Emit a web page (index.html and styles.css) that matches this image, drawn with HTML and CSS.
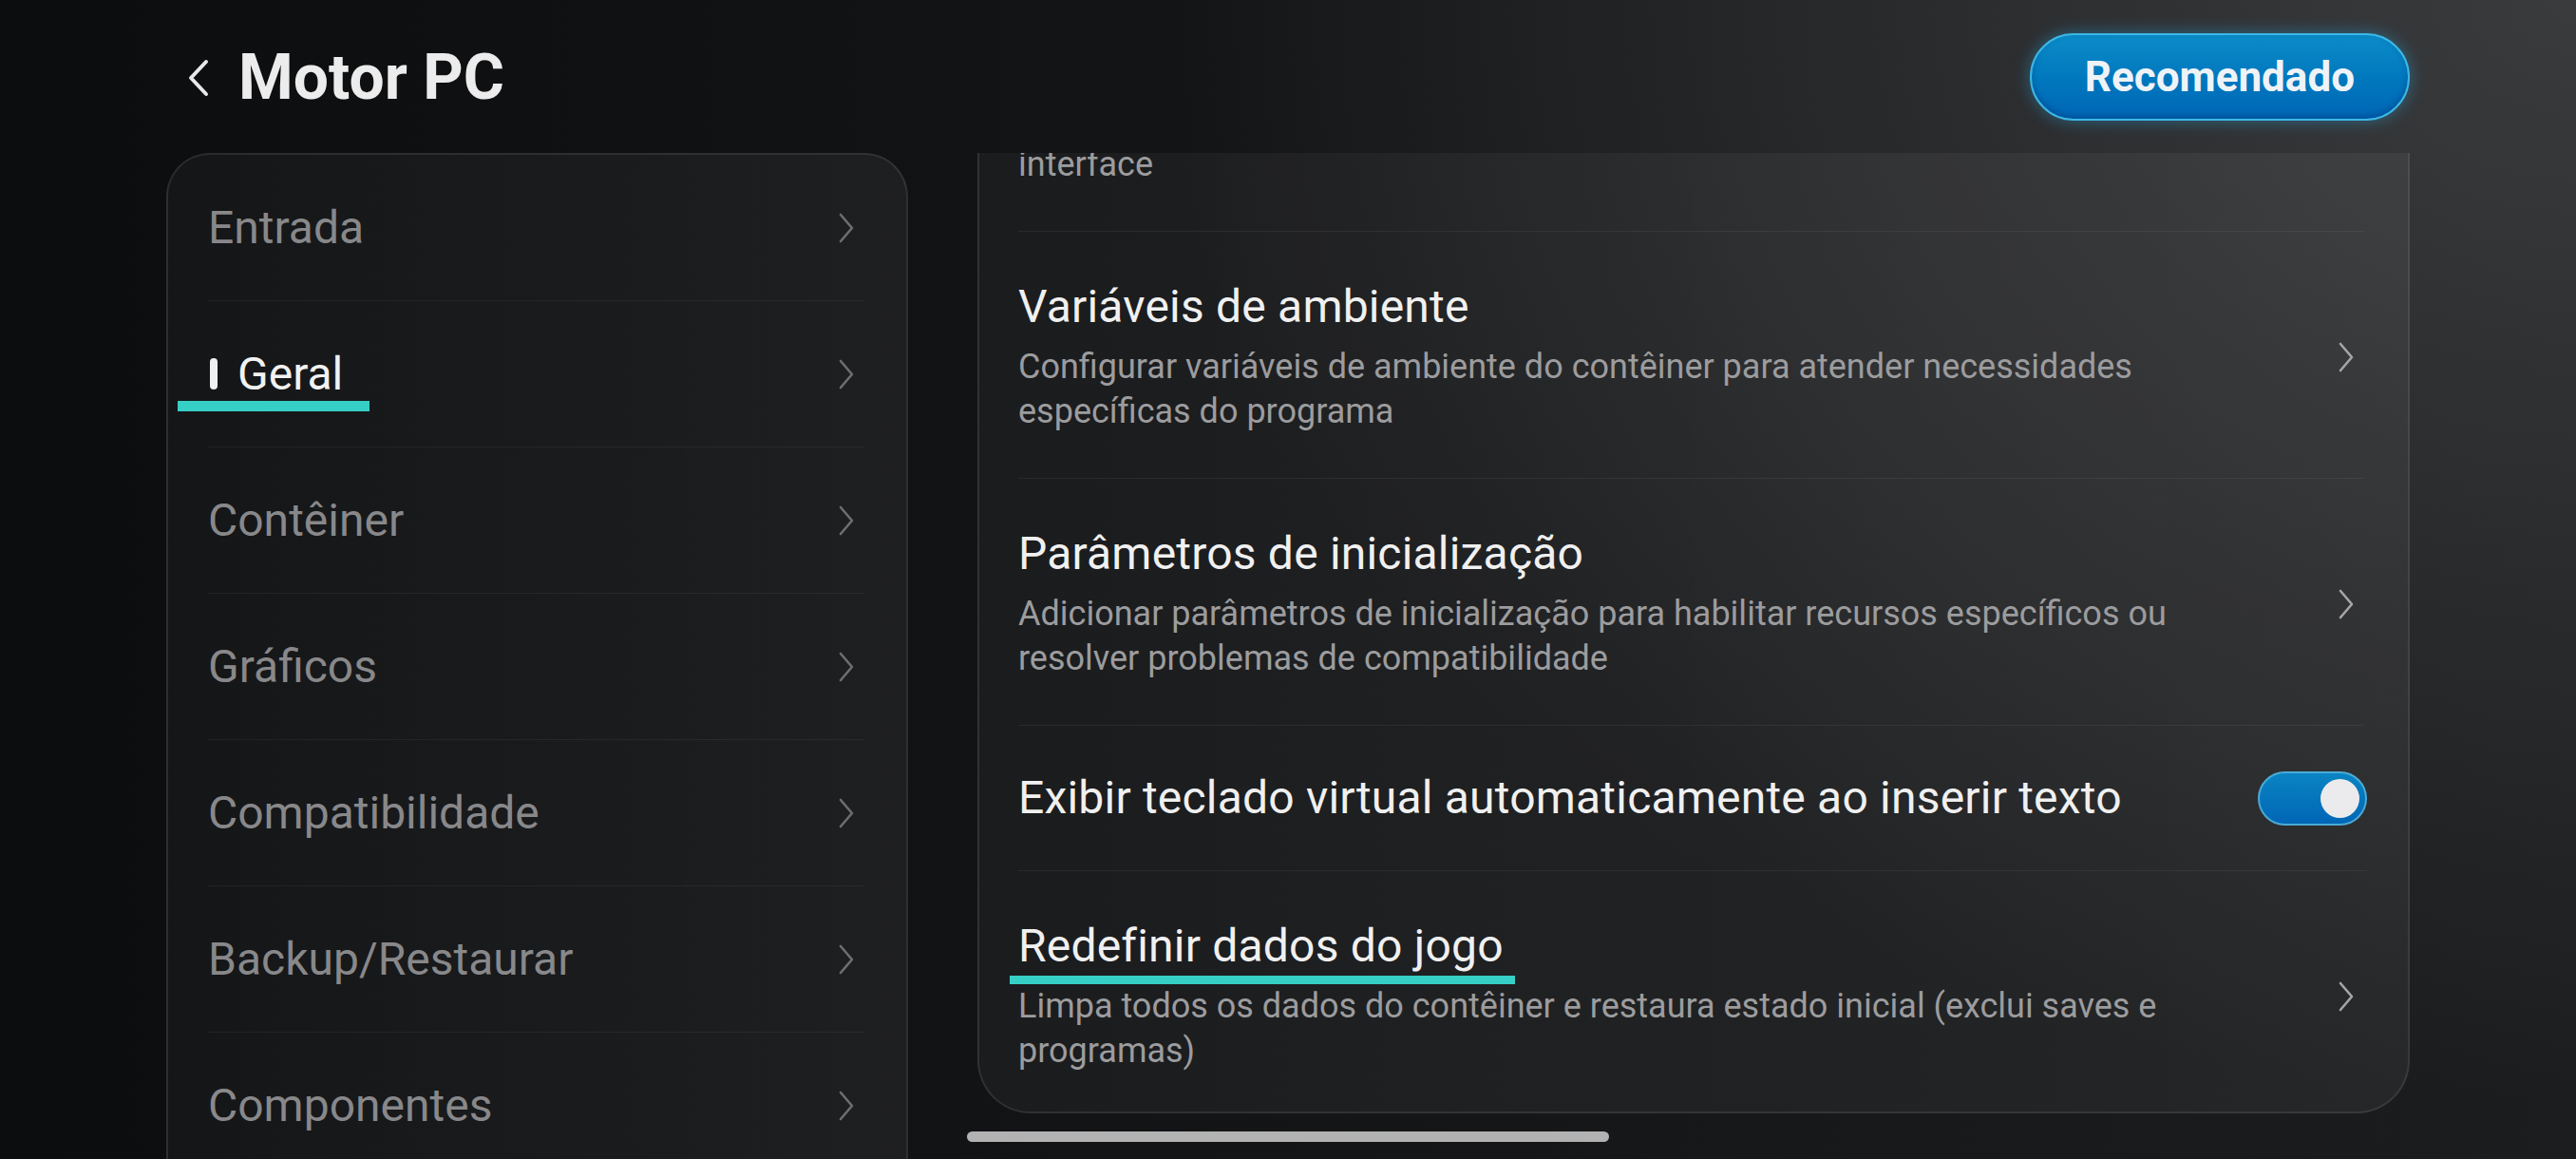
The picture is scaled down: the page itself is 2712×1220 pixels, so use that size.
FILE: index.html
```html
<!DOCTYPE html>
<html lang="pt">
<head>
    <meta charset="UTF-8">
    <title>Motor PC</title>
    <link rel="stylesheet" href="styles.css">
</head>
<body>
    <header class="topbar">
        <div class="topbar-title">
            <svg class="back-icon" width="24" height="42" viewBox="0 0 24 42"><path d="M20 4 L4 21 L20 38" fill="none" stroke="#e8e8e8" stroke-width="4" stroke-linecap="round" stroke-linejoin="round"/></svg>
            <h1>Motor PC</h1>
        </div>
        <button class="btn-recommended">Recomendado</button>
    </header>

    <main class="layout">
        <!-- left menu -->
        <nav class="side-menu">
            <div class="menu-item">
                <span class="menu-label">Entrada</span>
                <svg class="chev" width="18" height="32" viewBox="0 0 18 32"><path d="M3 2 L15 16 L3 30" fill="none" stroke="currentColor" stroke-width="2.6" stroke-linecap="round" stroke-linejoin="round"/></svg>
            </div>
            <div class="menu-item active">
                <span class="menu-label"><i class="marker"></i>Geral</span>
                <svg class="chev" width="18" height="32" viewBox="0 0 18 32"><path d="M3 2 L15 16 L3 30" fill="none" stroke="currentColor" stroke-width="2.6" stroke-linecap="round" stroke-linejoin="round"/></svg>
            </div>
            <div class="menu-item">
                <span class="menu-label">Contêiner</span>
                <svg class="chev" width="18" height="32" viewBox="0 0 18 32"><path d="M3 2 L15 16 L3 30" fill="none" stroke="currentColor" stroke-width="2.6" stroke-linecap="round" stroke-linejoin="round"/></svg>
            </div>
            <div class="menu-item">
                <span class="menu-label">Gráficos</span>
                <svg class="chev" width="18" height="32" viewBox="0 0 18 32"><path d="M3 2 L15 16 L3 30" fill="none" stroke="currentColor" stroke-width="2.6" stroke-linecap="round" stroke-linejoin="round"/></svg>
            </div>
            <div class="menu-item">
                <span class="menu-label">Compatibilidade</span>
                <svg class="chev" width="18" height="32" viewBox="0 0 18 32"><path d="M3 2 L15 16 L3 30" fill="none" stroke="currentColor" stroke-width="2.6" stroke-linecap="round" stroke-linejoin="round"/></svg>
            </div>
            <div class="menu-item">
                <span class="menu-label">Backup/Restaurar</span>
                <svg class="chev" width="18" height="32" viewBox="0 0 18 32"><path d="M3 2 L15 16 L3 30" fill="none" stroke="currentColor" stroke-width="2.6" stroke-linecap="round" stroke-linejoin="round"/></svg>
            </div>
            <div class="menu-item">
                <span class="menu-label">Componentes</span>
                <svg class="chev" width="18" height="32" viewBox="0 0 18 32"><path d="M3 2 L15 16 L3 30" fill="none" stroke="currentColor" stroke-width="2.6" stroke-linecap="round" stroke-linejoin="round"/></svg>
            </div>
        </nav>

        <!-- settings list, scrolled -->
        <section class="options-viewport">
            <div class="options">
                <div class="option">
                    <div class="option-text">
                        <div class="option-title">Escala da interface</div>
                        <div class="option-desc">Ajustar o tamanho dos elementos exibidos na<br>interface</div>
                    </div>
                    <svg class="chev" width="18" height="32" viewBox="0 0 18 32"><path d="M3 2 L15 16 L3 30" fill="none" stroke="currentColor" stroke-width="2.6" stroke-linecap="round" stroke-linejoin="round"/></svg>
                </div>
                <div class="option">
                    <div class="option-text">
                        <div class="option-title">Variáveis de ambiente</div>
                        <div class="option-desc">Configurar variáveis de ambiente do contêiner para atender necessidades específicas do programa</div>
                    </div>
                    <svg class="chev" width="18" height="32" viewBox="0 0 18 32"><path d="M3 2 L15 16 L3 30" fill="none" stroke="currentColor" stroke-width="2.6" stroke-linecap="round" stroke-linejoin="round"/></svg>
                </div>
                <div class="option">
                    <div class="option-text">
                        <div class="option-title">Parâmetros de inicialização</div>
                        <div class="option-desc">Adicionar parâmetros de inicialização para habilitar recursos específicos ou resolver problemas de compatibilidade</div>
                    </div>
                    <svg class="chev" width="18" height="32" viewBox="0 0 18 32"><path d="M3 2 L15 16 L3 30" fill="none" stroke="currentColor" stroke-width="2.6" stroke-linecap="round" stroke-linejoin="round"/></svg>
                </div>
                <div class="option option-switch">
                    <div class="option-title">Exibir teclado virtual automaticamente ao inserir texto</div>
                    <span class="switch on"><i class="knob"></i></span>
                </div>
                <div class="option">
                    <div class="option-text">
                        <div class="option-title"><span class="mark">Redefinir dados do jogo</span></div>
                        <div class="option-desc">Limpa todos os dados do contêiner e restaura estado inicial (exclui saves e programas)</div>
                    </div>
                    <svg class="chev" width="18" height="32" viewBox="0 0 18 32"><path d="M3 2 L15 16 L3 30" fill="none" stroke="currentColor" stroke-width="2.6" stroke-linecap="round" stroke-linejoin="round"/></svg>
                </div>
            </div>
        </section>
    </main>

    <div class="home-bar"></div>
</body>
</html>
```

FILE: styles.css
```css
/* Motor PC settings screen */
body {
    margin: 0;
    width: 2712px;
    height: 1220px;
    overflow: hidden;
    font-family: Roboto, "Noto Sans", sans-serif;
    color: #eeeeee;
    background:
        radial-gradient(ellipse 55% 95% at 100% 0%, #3a3b3d 0%, rgba(58, 59, 61, 0) 100%),
        linear-gradient(90deg, #0c0d0f 0%, #131416 45%, #1c1d1f 100%);
}

/* Header */
.topbar {
    height: 161px;
    display: flex;
    align-items: center;
    justify-content: space-between;
    padding: 0 175px 0 197px;
    box-sizing: border-box;
}
.topbar-title {
    display: flex;
    align-items: center;
    padding-top: 3px;
}
.back-icon {
    margin-right: 30px;
}
.topbar h1 {
    margin: 0;
    font-size: 66px;
    font-weight: 700;
    line-height: 1;
    color: #ececec;
}
.btn-recommended {
    height: 92px;
    padding: 0 56px;
    border: 2px solid #3cb8e6;
    border-radius: 46px;
    background: linear-gradient(180deg, #0b8bc8 0%, #0077bd 55%, #0066b6 100%);
    box-shadow: 0 0 18px rgba(40, 170, 230, 0.45), inset 0 -3px 6px rgba(0, 40, 100, 0.35);
    color: #eef3f8;
    font-family: Roboto, "Noto Sans", sans-serif;
    font-size: 44px;
    font-weight: 700;
}

/* Two columns */
.layout {
    display: flex;
    gap: 73px;
    padding: 0 175px;
    height: 1059px;
}

/* Left menu */
.side-menu {
    width: 781px;
    flex-shrink: 0;
    height: 1200px;
    box-sizing: border-box;
    border: 2px solid rgba(255, 255, 255, 0.09);
    border-radius: 46px;
    background: linear-gradient(90deg, rgba(255, 255, 255, 0.035), rgba(255, 255, 255, 0.055));
}
.menu-item {
    height: 153px;
    margin: 0 44px 0 42px;
    padding-right: 10px;
    display: flex;
    align-items: center;
    justify-content: space-between;
    border-bottom: 1px solid rgba(255, 255, 255, 0.055);
    color: #6e6e70;
}
.menu-label {
    display: flex;
    align-items: center;
    font-size: 48px;
    line-height: 56px;
    color: #88888a;
}
.menu-item.active .menu-label {
    position: relative;
    color: #f2f2f2;
}
.marker {
    width: 8px;
    height: 33px;
    border-radius: 4px;
    background: #f0f0f0;
    margin: 0 21px 0 2px;
}
.menu-item.active .menu-label::after {
    content: "";
    position: absolute;
    left: -32px;
    width: 202px;
    bottom: -11px;
    height: 11px;
    background: #36cfc6;
}

/* Right list */
.options-viewport {
    width: 1508px;
    flex-shrink: 0;
    overflow: hidden;
}
.options {
    margin-top: -179px;
    border: 2px solid rgba(255, 255, 255, 0.09);
    border-radius: 56px;
    background: linear-gradient(90deg, rgba(255, 255, 255, 0.04), rgba(255, 255, 255, 0.05));
}
.option {
    display: flex;
    align-items: center;
    justify-content: space-between;
    margin: 0 46px 0 41px;
    padding: 51px 10px 46px 0;
    border-bottom: 1px solid rgba(255, 255, 255, 0.06);
    color: #a6a6a8;
}
.option:last-child {
    border-bottom: none;
    padding-bottom: 40px;
}
.option-text {
    width: 1285px;
}
.option-title {
    font-size: 48px;
    line-height: 56px;
    letter-spacing: 0.2px;
    color: #f0f0f0;
}
.option-desc {
    margin-top: 12px;
    font-size: 36px;
    line-height: 47px;
    color: #9c9c9e;
}
.option-switch {
    height: 153px;
    padding: 0;
    margin-right: 43px;
    box-sizing: border-box;
}
.mark {
    position: relative;
}
.mark::after {
    content: "";
    position: absolute;
    left: -9px;
    right: -12px;
    bottom: -12px;
    height: 9px;
    background: #36cfc6;
}

/* Toggle switch */
.switch {
    width: 115px;
    height: 57px;
    box-sizing: border-box;
    border: 2px solid #4aaad6;
    border-radius: 29px;
    background: linear-gradient(180deg, #0a84c2, #0066b6);
    display: flex;
    align-items: center;
    justify-content: flex-end;
    padding: 0 6px;
}
.knob {
    width: 41px;
    height: 41px;
    border-radius: 50%;
    background: #ebebed;
}

/* System gesture bar */
.home-bar {
    position: absolute;
    left: 1018px;
    top: 1191px;
    width: 676px;
    height: 11px;
    border-radius: 6px;
    background: #b2b2b2;
}
```
